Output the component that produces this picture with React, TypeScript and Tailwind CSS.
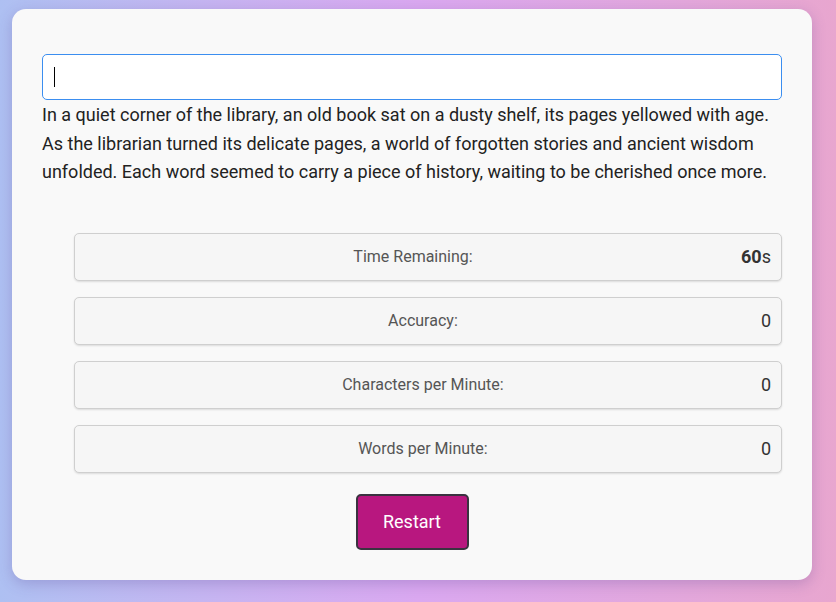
const stats = [
  { label: 'Time Remaining:', value: '60', unit: 's' },
  { label: 'Accuracy:', value: '0' },
  { label: 'Characters per Minute:', value: '0' },
  { label: 'Words per Minute:', value: '0' },
];

export default function App() {
  return (
    <div
      className="w-[836px] h-[602px] overflow-hidden bg-gradient-to-r from-[#aec0f2] via-[#daa8f0] to-[#e8a6cf] pt-[9px] pl-[12px]"
      style={{ fontFamily: 'Roboto, "Liberation Sans", sans-serif' }}
    >
      <div className="w-[800px] h-[571px] rounded-[14px] bg-[#f9f9f9] shadow-[0_4px_14px_rgba(80,60,140,0.25)] px-[30px] pt-[45px] flex flex-col">
        <div className="h-[46px] w-full rounded-[5px] border border-[#3b8ef0] bg-white flex items-center pl-[11px]">
          <span className="block w-px h-[20px] bg-black" />
        </div>
        <p className="text-[18px] leading-[28.5px] text-[#222] mt-[1px]">
          In a quiet corner of the library, an old book sat on a dusty shelf, its pages yellowed with age. As the librarian turned its delicate pages, a world of forgotten stories and ancient wisdom unfolded. Each word seemed to carry a piece of history, waiting to be cherished once more.
        </p>
        <div className="ml-[32px] mt-[46px] flex flex-col gap-4">
          {stats.map((s) => (
            <div
              key={s.label}
              className="h-[48px] rounded-[5px] border border-[#cfcfcf] bg-[#f6f6f6] shadow-[0_1px_2px_rgba(0,0,0,0.12)] flex items-center px-[10px]"
            >
              <span className="flex-1 text-center text-[16px] text-[#555]">{s.label}</span>
              <span className="text-[18px] text-[#333]">
                {s.unit ? <b className="font-bold">{s.value}</b> : s.value}
                {s.unit}
              </span>
            </div>
          ))}
        </div>
        <div className="flex justify-center mt-[21px]">
          <button className="w-[113px] h-[56px] rounded-[5px] border-2 border-[#3a3340] bg-[#b8177f] text-white text-[18px] font-normal">
            Restart
          </button>
        </div>
      </div>
    </div>
  );
}
